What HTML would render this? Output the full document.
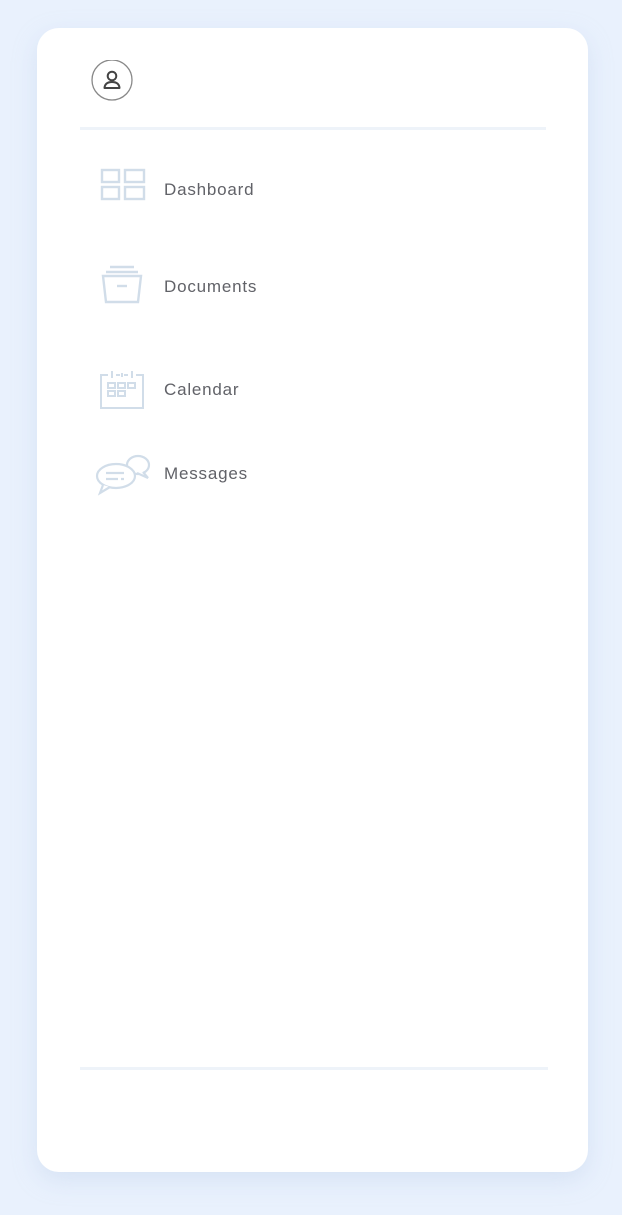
<!DOCTYPE html><html><head><style>
body{margin:0;width:622px;height:1215px;background:#e9f1fd;font-family:"Liberation Sans",sans-serif;position:relative;overflow:hidden}
.card{position:absolute;left:37px;top:28px;width:551px;height:1144px;background:#fff;border-radius:22px;box-shadow:0 8px 24px rgba(180,200,230,.35)}
.hr{position:absolute;height:3px;background:#eef3f9}
.t{position:absolute;left:164px;font-size:17px;color:#616268;line-height:20px;letter-spacing:0.8px}
svg{position:absolute}
</style></head><body>
<div class="card"></div>
<svg style="left:90px;top:60px" width="44" height="42" viewBox="0 0 44 42"><circle cx="22" cy="20" r="20" fill="none" stroke="#888" stroke-width="1.3"/><circle cx="22" cy="16" r="4.3" fill="none" stroke="#444" stroke-width="2"/><path d="M14.5 28 Q15 22 22 22 Q29 22 29.5 28 Z" fill="none" stroke="#444" stroke-width="2" stroke-linejoin="round"/></svg>
<div class="hr" style="left:80px;top:127px;width:466px"></div>
<svg style="left:100px;top:168px" width="46" height="34" viewBox="0 0 46 34" fill="none" stroke="#d1dde9" stroke-width="2.4"><rect x="2" y="2" width="17" height="12"/><rect x="25" y="2" width="19" height="12"/><rect x="2" y="19" width="17" height="12"/><rect x="25" y="19" width="19" height="12"/></svg>
<div class="t" style="top:180px">Dashboard</div>
<svg style="left:100px;top:264px" width="44" height="40" viewBox="0 0 44 40" fill="none" stroke="#d1dde9" stroke-width="2.4"><path d="M10 3h24M6 8h32"/><path d="M3 12h38l-3 26H6z"/><path d="M17 22h10"/></svg>
<div class="t" style="top:277px">Documents</div>
<svg style="left:99px;top:370px" width="46" height="40" viewBox="0 0 46 40" fill="none" stroke="#d1dde9" stroke-width="2"><path d="M9 5H2v33h42V5h-7M17 5h4M25 5h4"/><path d="M13 1v7M23 3v4M33 1v7"/><rect x="9" y="13" width="7" height="5"/><rect x="19" y="13" width="7" height="5"/><rect x="29" y="13" width="7" height="5"/><rect x="9" y="21" width="7" height="5"/><rect x="19" y="21" width="7" height="5"/></svg>
<div class="t" style="top:380px">Calendar</div>
<svg style="left:94px;top:452px" width="58" height="44" viewBox="0 0 58 44" stroke="#d1dde9" stroke-width="2.2"><ellipse cx="44" cy="13" rx="11" ry="9" fill="none"/><path d="M49 20 L54 26 L43 21" fill="#fff"/><ellipse cx="22" cy="24" rx="19" ry="12" fill="#fff"/><path d="M9 33 L6 41 L16 35" fill="#fff"/><path d="M12 21h18M12 27h12M27 27h3" fill="none"/></svg>
<div class="t" style="top:464px">Messages</div>
<div class="hr" style="left:80px;top:1067px;width:468px"></div>
</body></html>
